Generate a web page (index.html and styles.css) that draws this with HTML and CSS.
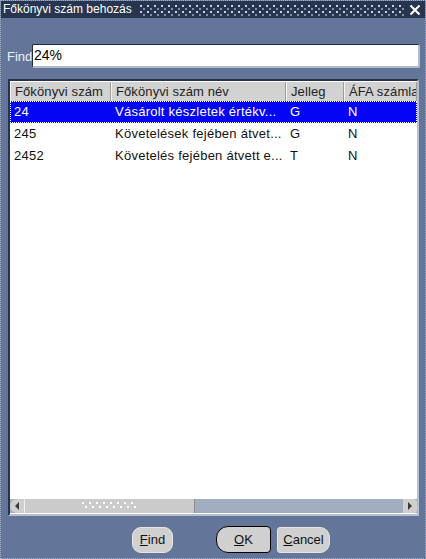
FILE: index.html
```html
<!DOCTYPE html>
<html lang="hu">
<head>
<meta charset="utf-8">
<title>Főkönyvi szám behozás</title>
<link rel="stylesheet" href="styles.css">
</head>
<body>
<div class="window">
  <div class="titlebar">
    <span class="title">Főkönyvi szám behozás</span>
    <span class="grip"></span>
    <span class="close">
      <svg width="12" height="12" viewBox="0 0 12 12"><path d="M1.5 1.5 L10.5 10.5 M10.5 1.5 L1.5 10.5" stroke="#ffffff" stroke-width="2" fill="none"/></svg>
    </span>
  </div>
  <div class="find-row">
    <label class="find-label">Find</label>
    <div class="find-input">24%</div>
  </div>
  <div class="table">
    <div class="thead">
      <div class="th">Főkönyvi szám</div>
      <div class="th">Főkönyvi szám név</div>
      <div class="th">Jelleg</div>
      <div class="th">ÁFA számla</div>
    </div>
    <div class="tbody">
      <div class="tr selected">
        <div class="td">24</div>
        <div class="td">Vásárolt készletek értékv...</div>
        <div class="td">G</div>
        <div class="td">N</div>
      </div>
      <div class="tr">
        <div class="td">245</div>
        <div class="td">Követelések fejében átvet...</div>
        <div class="td">G</div>
        <div class="td">N</div>
      </div>
      <div class="tr">
        <div class="td">2452</div>
        <div class="td">Követelés fejében átvett e...</div>
        <div class="td">T</div>
        <div class="td">N</div>
      </div>
    </div>
    <div class="hscroll">
      <div class="sbtn left"><svg width="6" height="8" viewBox="0 0 6 8"><path d="M5 0 L1 4 L5 8 Z" fill="#3a3a3a"/></svg></div>
      <div class="thumb"><span class="dots"></span></div>
      <div class="track"></div>
      <div class="sbtn right"><svg width="6" height="8" viewBox="0 0 6 8"><path d="M1 0 L5 4 L1 8 Z" fill="#3a3a3a"/></svg></div>
    </div>
  </div>
  <div class="buttons">
    <button class="btn btn-find"><u>F</u>ind</button>
    <button class="btn btn-ok"><u>O</u>K</button>
    <button class="btn btn-cancel"><u>C</u>ancel</button>
  </div>
</div>
</body>
</html>
```
FILE: styles.css
```css
html, body {
  margin: 0;
  padding: 0;
  background: #63769a;
}
body {
  font-family: "Liberation Sans", Arial, sans-serif;
  font-size: 13px;
}
.window {
  box-sizing: border-box;
  width: 426px;
  height: 559px;
  border: 1px dotted #a8b0bc;
  background: #63769a;
  display: flex;
  flex-direction: column;
}
.titlebar {
  height: 17px;
  background: #27364e;
  display: flex;
  align-items: center;
  color: #ffffff;
}
.title {
  font-size: 12px;
  padding-left: 2px;
  white-space: nowrap;
  line-height: 17px;
}
.grip {
  flex: 1;
  height: 12px;
  margin: 0 4px 0 8px;
  background-image:
    radial-gradient(circle at 1px 1px, #c8d0dc 0.9px, transparent 1.1px),
    radial-gradient(circle at 1px 1px, #8090a8 0.9px, transparent 1.1px);
  background-size: 7px 6px, 7px 6px;
  background-position: 0 1px, 3px 4px;
}
.close {
  width: 14px;
  height: 14px;
  display: flex;
  align-items: center;
  justify-content: center;
  margin-right: 3px;
}
.find-row {
  display: flex;
  align-items: center;
  margin-top: 26px;
  padding-left: 6px;
  padding-right: 5px;
}
.find-label {
  color: #eef0f4;
  width: 25px;
  font-size: 13px;
}
.find-input {
  box-sizing: border-box;
  flex: 1;
  height: 24px;
  background: #ffffff;
  border-top: 1px solid #1e2a3e;
  border-left: 1px solid #1e2a3e;
  border-right: 2px solid #b0bccc;
  border-bottom: 2px solid #b0bccc;
  border-radius: 2px;
  font-size: 14px;
  line-height: 20px;
  padding-left: 1px;
  color: #000;
}
.table {
  box-sizing: border-box;
  margin: 11px 6px 0 7px;
  height: 437px;
  border-top: 2px solid #25334a;
  border-left: 2px solid #25334a;
  border-right: 2px solid #b4bfcf;
  border-bottom: 2px solid #b4bfcf;
  background: #ffffff;
  display: flex;
  flex-direction: column;
  overflow: hidden;
}
.thead, .tr {
  display: grid;
  grid-template-columns: 101px 175px 58px 1fr;
}
.thead {
  height: 19px;
  margin-top: 1px;
  background: #d2d2d2;
}
.th {
  box-sizing: border-box;
  border-left: 1px solid #f4f4f4;
  border-right: 1px solid #9c9c9c;
  padding-left: 4px;
  line-height: 19px;
  color: #222;
  white-space: nowrap;
  overflow: hidden;
  letter-spacing: 0.1px;
}
.tbody {
  flex: 1;
}
.tr {
  height: 22px;
  color: #111;
}
.td {
  padding-left: 4px;
  line-height: 22px;
  white-space: nowrap;
  overflow: hidden;
  letter-spacing: 0.25px;
}
.tr.selected {
  background: #0505f5;
  color: #ffffff;
  outline: 1px dotted #ffffff;
  outline-offset: -1px;
}
.hscroll {
  display: flex;
  height: 14px;
  margin-bottom: 1px;
  background: #a2aec0;
}
.sbtn {
  width: 14px;
  height: 14px;
  background: #cfcfcf;
  display: flex;
  align-items: center;
  justify-content: center;
}
.sbtn.left {
  border-radius: 7px 0 0 7px;
}
.sbtn.right {
  border-radius: 0 4px 4px 0;
}
.thumb {
  box-sizing: border-box;
  width: 171px;
  height: 14px;
  background: #cbcbcb;
  border-left: 1px solid #f0f0f0;
  border-right: 1px solid #8c8c8c;
  display: flex;
  align-items: center;
  justify-content: center;
}
.dots {
  width: 56px;
  height: 8px;
  background-image:
    radial-gradient(circle at 1px 1px, #ffffff 0.9px, transparent 1.1px),
    radial-gradient(circle at 1px 1px, #ffffff 0.9px, transparent 1.1px);
  background-size: 7px 8px, 7px 8px;
  background-position: 0 0, 3px 4px;
}
.track {
  flex: 1;
}
.buttons {
  display: flex;
  justify-content: center;
  align-items: center;
  margin-top: 10px;
  padding-left: 36px;
}
.btn {
  font-family: "Liberation Sans", Arial, sans-serif;
  font-size: 13px;
  color: #111;
  background: #d0d0d0;
  border: 1px solid #e6e6e6;
  height: 26px;
  padding: 0;
  cursor: default;
}
.btn-find {
  width: 41px;
  border-radius: 9px;
  margin-right: 43px;
}
.btn-ok {
  width: 55px;
  height: 27px;
  border: 1px solid #000;
  border-radius: 12px 4px 4px 12px;
  margin-right: 6px;
}
.btn-cancel {
  width: 53px;
  border-radius: 3px 10px 10px 3px;
}
```
